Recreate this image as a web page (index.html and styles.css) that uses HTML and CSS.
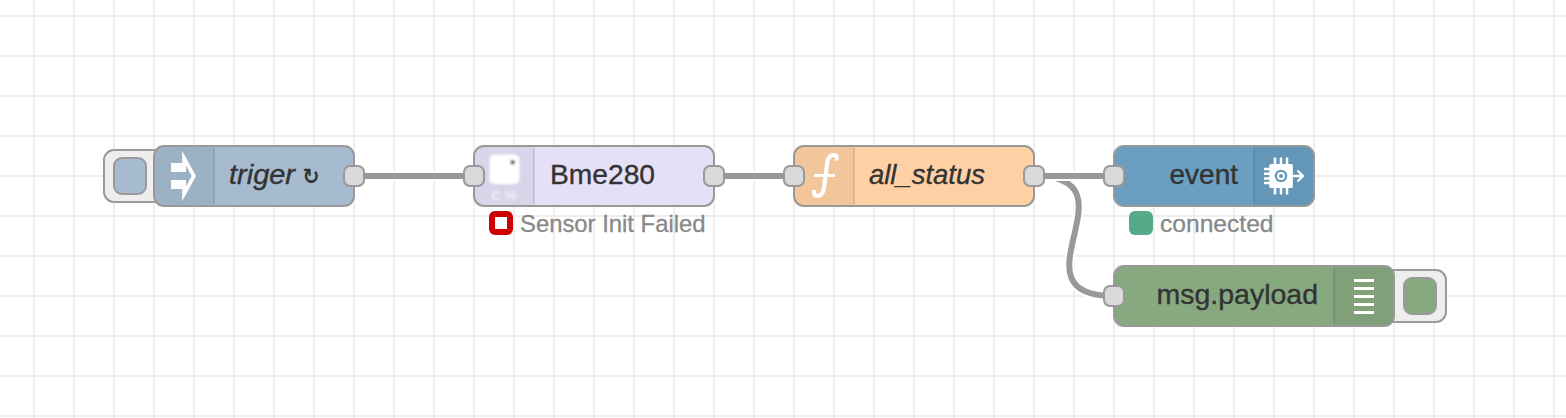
FILE: index.html
```html
<!DOCTYPE html>
<html lang="en">
<head>
<meta charset="utf-8">
<title>Flow</title>
<link rel="stylesheet" href="styles.css">
</head>
<body>
<svg class="flow" width="1566" height="418" viewBox="0 0 1566 418">
  <defs>
    <pattern id="grid" x="33" y="15" width="40" height="40" patternUnits="userSpaceOnUse">
      <path class="grid-line" d="M0 0H40V2H2V40H0Z"/>
    </pattern>
    <filter id="soft" x="-20%" y="-20%" width="140%" height="140%"><feGaussianBlur stdDeviation="0.8"/></filter>
  </defs>
  <rect width="1566" height="418" fill="url(#grid)"/>

  <!-- wires -->
  <g class="wires">
    <path class="wire-outline" d="M1034 176C1142 176 1006 296 1114 296"/>
    <path class="wire" d="M1034 176C1142 176 1006 296 1114 296"/>
    <path class="wire-outline" d="M354 176H474M714 176H794M1034 176H1114"/>
    <path class="wire" d="M354 176H474M714 176H794M1034 176H1114"/>
  </g>

  <!-- inject -->
  <g class="node inject">
    <rect class="button" x="104" y="150" width="64" height="52" rx="10"/>
    <rect class="body" x="114" y="158" width="32" height="36" rx="8"/>
    <rect class="body" x="154" y="146" width="200" height="60" rx="10"/>
    <path class="shade" d="M214 147H164Q155 147 155 156V196Q155 205 164 205H214Z"/>
    <path class="divider" d="M214 148V204"/>
    <path class="icon" d="M171 163H182.300V151L196 176L182.300 201V189H171V180H186V186.500L191.700 176L186 165.500V172H171Z"/>
    <text class="label italic" x="229" y="184" textLength="66" lengthAdjust="spacingAndGlyphs">triger</text>
    <text class="repeat" x="302.500" y="184" textLength="17" lengthAdjust="spacingAndGlyphs">↻</text>
    <rect class="port" x="344" y="166" width="20" height="20" rx="6"/>
  </g>

  <!-- sensor -->
  <g class="node sensor">
    <rect class="body" x="474" y="146" width="240" height="60" rx="10"/>
    <path class="shade" d="M534 147H484Q475 147 475 156V196Q475 205 484 205H534Z"/>
    <path class="divider" d="M534 148V204"/>
    <g filter="url(#soft)">
      <rect class="icon" x="489.500" y="154.500" width="30" height="29.500" rx="5"/>
      <circle class="sensor-dot" cx="512.700" cy="162.300" r="2.300"/>
      <text class="units" x="491.500" y="200" textLength="25" lengthAdjust="spacingAndGlyphs">C %</text>
    </g>
    <text class="label" x="550" y="184" textLength="105" lengthAdjust="spacingAndGlyphs">Bme280</text>
    <rect class="port" x="464" y="166" width="20" height="20" rx="6"/>
    <rect class="port" x="704" y="166" width="20" height="20" rx="6"/>
    <rect class="status-ring" x="492" y="214" width="18" height="18" rx="3"/>
    <text class="status" x="520" y="232" textLength="185.500" lengthAdjust="spacingAndGlyphs">Sensor Init Failed</text>
  </g>

  <!-- function -->
  <g class="node function">
    <rect class="body" x="794" y="146" width="240" height="60" rx="10"/>
    <path class="shade" d="M854 147H804Q795 147 795 156V196Q795 205 804 205H854Z"/>
    <path class="divider" d="M854 148V204"/>
    <path class="func-stroke" d="M836.800 160.500V158Q836.800 155 833.500 155C829.500 155 827.800 158.500 827.200 163L824 187.500C823.300 193 821.500 195.800 817.500 195.800Q814 195.800 814 192.500V190"/>
    <path class="icon" d="M814 174H835V177H814Z"/>
    <text class="label italic" x="869" y="184" textLength="116" lengthAdjust="spacingAndGlyphs">all_status</text>
    <rect class="port" x="784" y="166" width="20" height="20" rx="6"/>
    <rect class="port" x="1024" y="166" width="20" height="20" rx="6"/>
  </g>

  <!-- event -->
  <g class="node event">
    <rect class="body" x="1114" y="146" width="200" height="60" rx="10"/>
    <path class="shade" d="M1254 147H1304Q1313 147 1313 156V196Q1313 205 1304 205H1254Z"/>
    <path class="divider" d="M1254 148V204"/>
    <rect class="icon" x="1269.300" y="164" width="23.500" height="24" rx="1.500"/>
    <path class="pins" d="M1275 157.500V194.500M1281 157.500V194.500M1287 157.500V194.500M1264 169H1271M1264 173.700H1271M1264 178.400H1271M1264 183H1271"/>
    <circle class="chip-ring" cx="1281" cy="176" r="5.100"/>
    <circle class="chip-dot" cx="1281" cy="176" r="2"/>
    <path class="arrow" d="M1292 176H1302M1297.500 170.500L1303 176L1297.500 181.500"/>
    <text class="label" x="1169.500" y="184" textLength="68.500" lengthAdjust="spacingAndGlyphs">event</text>
    <rect class="port" x="1104" y="166" width="20" height="20" rx="6"/>
    <rect class="status-dot" x="1129" y="211" width="24" height="24" rx="6"/>
    <text class="status" x="1160" y="232" textLength="113.500" lengthAdjust="spacingAndGlyphs">connected</text>
  </g>

  <!-- debug -->
  <g class="node debug">
    <rect class="button" x="1382" y="270" width="64" height="52" rx="10"/>
    <rect class="body" x="1404" y="278" width="32" height="36" rx="8"/>
    <rect class="body" x="1114" y="266" width="280" height="60" rx="10"/>
    <path class="shade" d="M1334 267H1384Q1393 267 1393 276V316Q1393 325 1384 325H1334Z"/>
    <path class="divider" d="M1334 268V324"/>
    <path class="icon" d="M1354 279h20v3h-20zM1354 287h20v3h-20zM1354 295h20v3h-20zM1354 303h20v3h-20zM1354 311h20v3h-20z"/>
    <text class="label" x="1156.500" y="304" textLength="161.500" lengthAdjust="spacingAndGlyphs">msg.payload</text>
    <rect class="port" x="1104" y="286" width="20" height="20" rx="6"/>
  </g>
</svg>
</body>
</html>
```
FILE: styles.css
```css
body { margin: 0; background: #fff; }
.flow { display: block; font-family: "Liberation Sans", Arial, sans-serif; }
.grid-line { fill: #eee; }
.wire, .wire-outline { fill: none; stroke: #999; stroke-width: 6; }
.wire-outline { stroke: #fff; stroke-width: 10; }
.body { stroke: #999; stroke-width: 2; }
.inject .body { fill: #a6bbcf; }
.sensor .body { fill: #e5e0f6; }
.function .body { fill: #ffd0a3; }
.event .body { fill: #6a9fc2; }
.debug .body { fill: #87a980; }
.button { fill: #eee; stroke: #999; stroke-width: 2; }
.port { fill: #d9d9d9; stroke: #999; stroke-width: 2; }
.shade { fill: #000; fill-opacity: 0.05; }
.divider { fill: none; stroke: #000; stroke-opacity: 0.1; stroke-width: 2; }
.icon { fill: #fff; }
.label { font-size: 28px; fill: #333; stroke: #333; stroke-width: 0.35; }
.italic { font-style: italic; }
.repeat { font-family: "DejaVu Sans", sans-serif; font-size: 22px; font-weight: bold; fill: #333; }
.status { font-size: 24px; fill: #888; stroke: #888; stroke-width: 0.3; }
.status-ring { fill: #fff; stroke: #c00; stroke-width: 6; }
.status-dot { fill: #5a8; }
.sensor-dot { fill: #555; }
.units { font-size: 13px; font-weight: bold; fill: #fff; fill-opacity: 0.65; }
.func-stroke { fill: none; stroke: #fff; stroke-width: 4.2; }
.pins { fill: none; stroke: #fff; stroke-width: 2.5; }
.chip-ring { fill: none; stroke: #6597b8; stroke-width: 2.3; }
.chip-dot { fill: #6597b8; }
.arrow { fill: none; stroke: #fff; stroke-width: 2.3; }
```
